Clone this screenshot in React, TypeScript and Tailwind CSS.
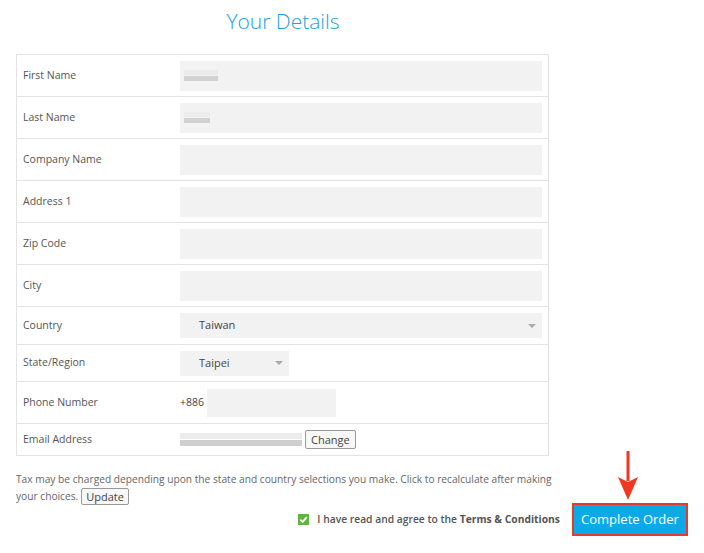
const font = { fontFamily: '"Open Sans", "Liberation Sans", sans-serif' };

function Blur({ widths }: { widths: number[] }) {
  return (
    <div className="flex items-center h-[30px] pl-[2px]">
      <div className="flex flex-col gap-[1px]">
        <div className="h-[5px] bg-[#ebebeb]" style={{ width: widths[0] }} />
        <div className="h-[5px] bg-[#d2d2d2]" style={{ width: widths[1] }} />
      </div>
    </div>
  );
}

function Caret() {
  return <span className="w-0 h-0 border-l-[4px] border-r-[4px] border-t-[4px] border-l-transparent border-r-transparent border-t-[#aaa]" />;
}

interface RowProps {
  label: string;
  height: string;
  children?: React.ReactNode;
  last?: boolean;
}

function Row({ label, height, children, last }: RowProps) {
  return (
    <div className={`flex items-center ${height} ${last ? "" : "border-b border-[#e3e3e3]"}`}>
      <div className="w-[156px] pl-[6px] text-[10.5px] text-[#555]">{label}</div>
      <div className="flex-1 pr-[6px] pl-[7px]">{children}</div>
    </div>
  );
}

const Input = ({ children }: { children?: React.ReactNode }) => (
  <div className="h-[30px] bg-[#f2f2f2]">{children}</div>
);

export default function App() {
  return (
    <div className="relative w-[704px] h-[553px] bg-white text-[#555]" style={font}>
      <h1 className="w-[566px] text-center text-[21px] font-light text-[#1ba1e2] pt-[6px] leading-[30px]">Your Details</h1>

      <div className="ml-[16px] mt-[18px] w-[533px] border border-[#e3e3e3]">
        <Row label="First Name" height="h-[42px]"><Input><div className="pl-[2px]"><Blur widths={[34, 34]} /></div></Input></Row>
        <Row label="Last Name" height="h-[42px]"><Input><div className="pl-[2px]"><Blur widths={[26, 26]} /></div></Input></Row>
        <Row label="Company Name" height="h-[42px]"><Input /></Row>
        <Row label="Address 1" height="h-[42px]"><Input /></Row>
        <Row label="Zip Code" height="h-[42px]"><Input /></Row>
        <Row label="City" height="h-[42px]"><Input /></Row>
        <Row label="Country" height="h-[38px]">
          <div className="h-[25px] bg-[#f2f2f2] flex items-center justify-between pl-[19px] pr-[6px] text-[11px] text-[#444]">
            <span>Taiwan</span>
            <Caret />
          </div>
        </Row>
        <Row label="State/Region" height="h-[37px]">
          <div className="w-[109px] h-[25px] bg-[#f2f2f2] flex items-center justify-between pl-[19px] pr-[6px] text-[11px] text-[#444]">
            <span>Taipei</span>
            <Caret />
          </div>
        </Row>
        <Row label="Phone Number" height="h-[42px]">
          <div className="flex items-center gap-[3px] text-[10.5px] text-[#444]">
            <span>+886</span>
            <div className="w-[129px] h-[28px] bg-[#f2f2f2]" />
          </div>
        </Row>
        <Row label="Email Address" height="h-[31px]" last>
          <div className="flex items-center gap-[3px]">
            <div className="w-[122px] h-[22px] flex flex-col justify-center gap-[1px]">
              <div className="h-[6px] bg-[#ececec] w-full" />
              <div className="h-[6px] bg-[#cfcfcf] w-full" />
            </div>
            <button className="h-[19px] px-[5px] text-[11px] text-[#444] bg-[#f7f7f7] border border-[#999] rounded-[2px] leading-none">Change</button>
          </div>
        </Row>
      </div>

      <div className="ml-[16px] mt-[15px] w-[545px] text-[10.2px] leading-[17px] text-[#666]">
        <p>Tax may be charged depending upon the state and country selections you make. Click to recalculate after making</p>
        <div className="flex items-center gap-[3px]">
          <span>your choices.</span>
          <button className="h-[17px] px-[4px] text-[11px] text-[#444] bg-[#f7f7f7] border border-[#999] rounded-[2px] leading-none">Update</button>
        </div>
      </div>

      <div className="flex items-center justify-end mt-[-2px] pr-[16px] gap-[12px]">
        <div className="flex items-center gap-[8px] text-[10.3px] font-semibold text-[#555]">
          <span className="w-[11px] h-[11px] bg-[#5db83a] flex items-center justify-center">
            <svg width="9" height="9" viewBox="0 0 10 10"><path d="M1.5 5.2 L4 7.6 L8.6 2.4" stroke="white" strokeWidth="2" fill="none" /></svg>
          </span>
          <span>I have read and agree to the <span className="font-bold">Terms &amp; Conditions</span></span>
        </div>
        <div className="border-2 border-[#e8392b]">
          <button className="w-[112px] h-[29px] bg-[#0da9e6] text-white text-[13px] leading-none">Complete Order</button>
        </div>
      </div>

      <svg className="absolute left-[616px] top-[451px]" width="24" height="50" viewBox="0 0 24 50">
        <path d="M12 0 L12 30" stroke="#f2391f" strokeWidth="3" />
        <path d="M2 26 L12 49 L22 26 L12 31 Z" fill="#f2391f" />
      </svg>
    </div>
  );
}
